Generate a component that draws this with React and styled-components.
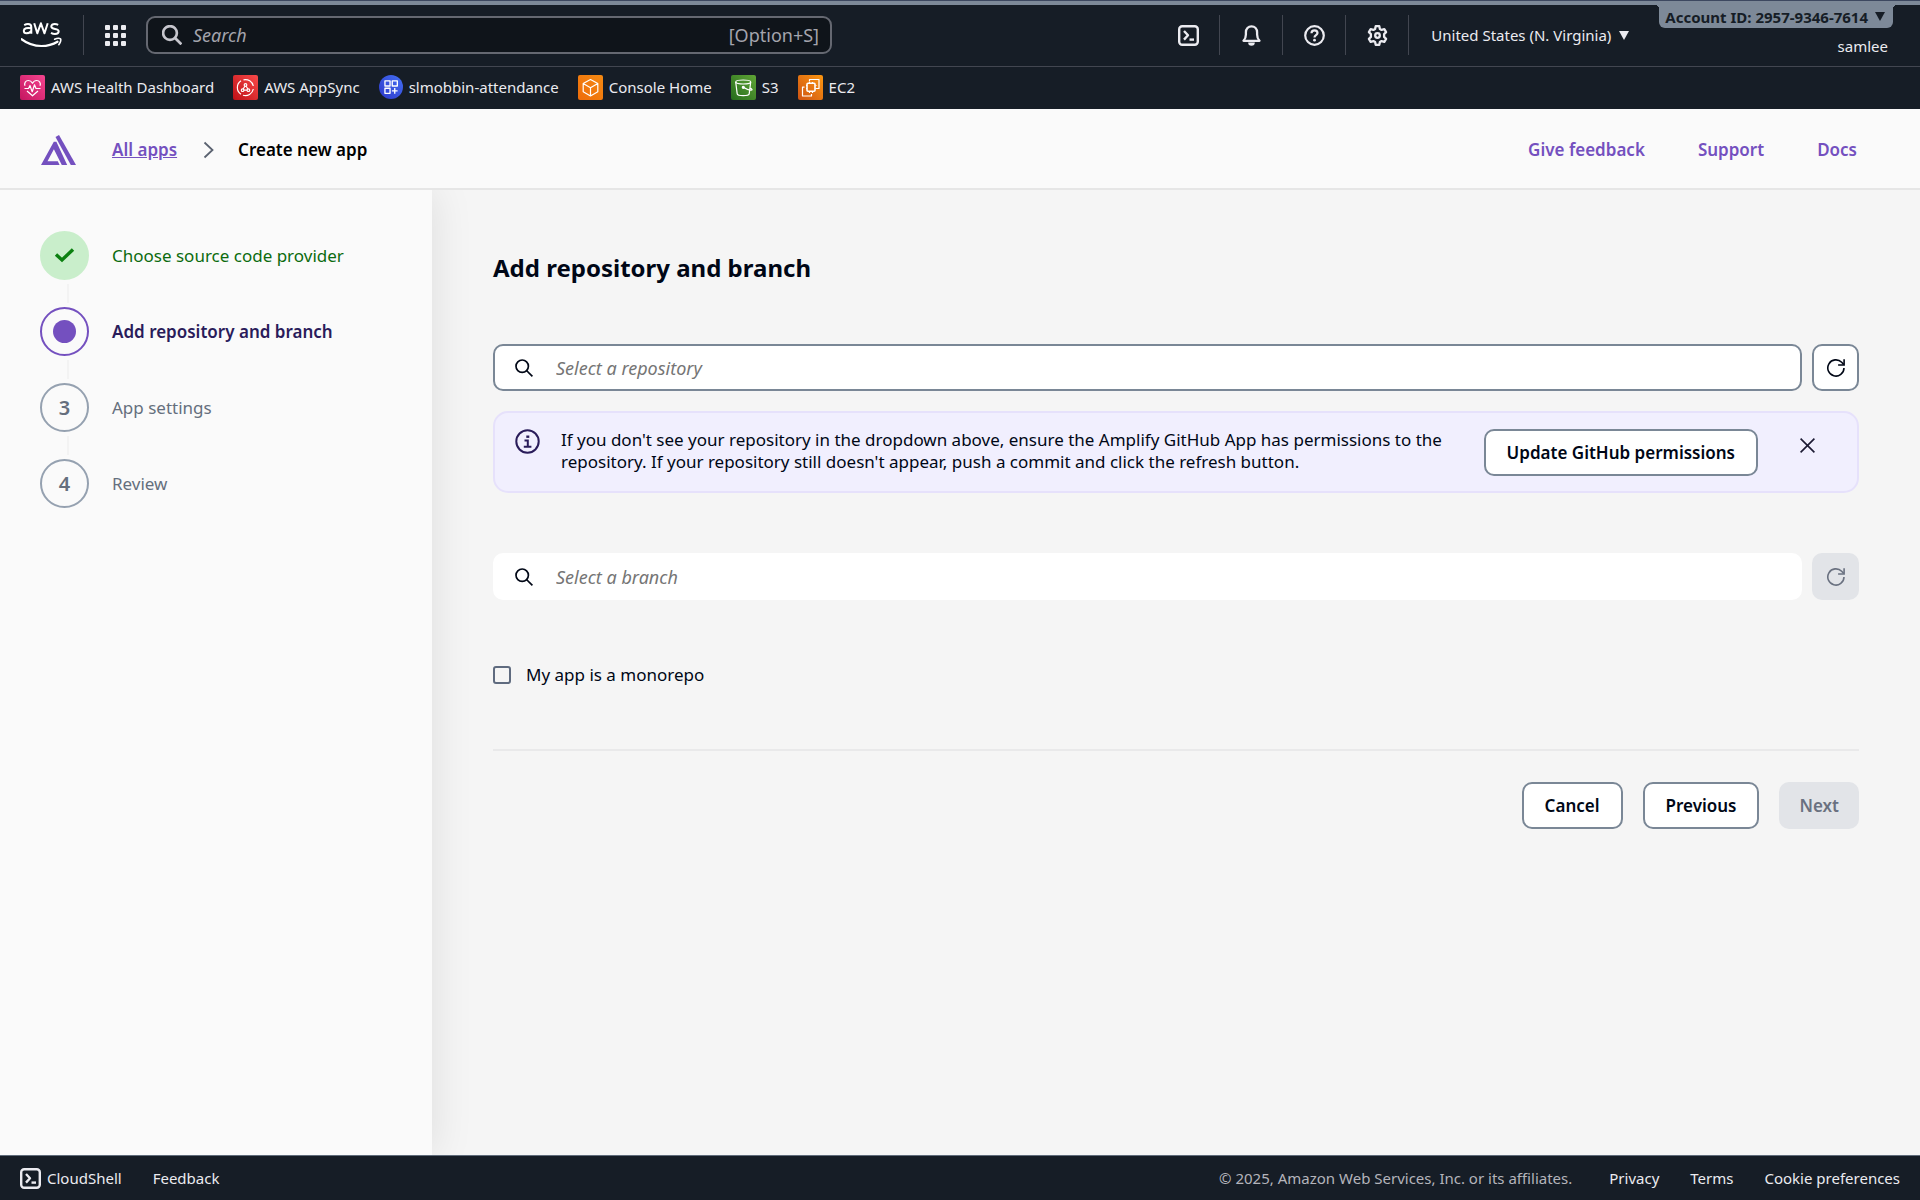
import React from "react";
import styled, { createGlobalStyle, css } from "styled-components";

const GlobalStyle = createGlobalStyle`
  *, *::before, *::after { box-sizing: border-box; }
  body {
    margin: 0;
    font-family: "Noto Sans", "Open Sans", sans-serif;
    font-size: 17px;
    color: #000716;
    background: #f5f5f5;
  }
  button, input { font: inherit; color: inherit; }
  a { color: inherit; text-decoration: none; }
  svg { display: block; flex: none; }
`;

const Page = styled.div`
  min-height: 100vh;
  display: flex;
  flex-direction: column;
`;

const AccentStrip = styled.div`
  height: 5px;
  background: #7d8998;
  border-top: 1px solid #3d4860;
`;

/* ---------- Console header ---------- */

const TopBar = styled.header`
  display: flex;
  height: 62px;
  background: #161d26;
  border-bottom: 1px solid #424650;
  color: #ebebf0;
`;

const TopGroup = styled.div`
  display: flex;
  align-items: center;
  padding-bottom: 1px;
`;

const Divider = styled.span`
  width: 1px;
  height: 40px;
  background: #424650;
`;

const IconButton = styled.button`
  display: flex;
  align-items: center;
  justify-content: center;
  width: 62px;
  height: 40px;
  padding: 0;
  border: 0;
  background: none;
  color: #ebebf0;
`;

const LogoLink = styled.a`
  display: flex;
  padding: 0 21px;
`;

const GlobalSearch = styled.label`
  display: flex;
  align-items: center;
  flex: 0 1 686px;
  height: 38px;
  padding: 0 11px 0 14px;
  border: 2px solid #656871;
  border-radius: 9px;
  background: #0f141a;
  color: #c6c6cd;
  font-size: 18px;
`;

const GlobalSearchInput = styled.input`
  flex: 1;
  min-width: 0;
  padding: 0 11px;
  border: 0;
  outline: 0;
  background: none;
  &::placeholder { color: #a4a4ad; font-style: italic; opacity: 1; }
`;

const Shortcut = styled.span`
  color: #a4a4ad;
`;

const SearchGroup = styled(TopGroup)`
  flex: 1;
  min-width: 0;
`;

const RegionButton = styled.button`
  display: flex;
  align-items: center;
  gap: 8px;
  height: 40px;
  margin: 0;
  padding: 0 8px 0 22px;
  border: 0;
  background: none;
  color: #ebebf0;
  font-size: 15px;
  white-space: nowrap;
`;

const Account = styled.div`
  display: flex;
  flex-direction: column;
  align-items: flex-end;
  gap: 7px;
  padding: 0 27px 0 22px;
`;

const AccountTab = styled.button`
  position: relative;
  display: flex;
  align-items: center;
  gap: 7px;
  height: 23px;
  padding: 0 8px 0 6px;
  border: 0;
  border-radius: 0 0 6px 6px;
  background: #7d8998;
  color: #161d26;
  font-size: 15px;
  font-weight: 700;
  white-space: nowrap;
  &::before, &::after {
    content: "";
    position: absolute;
    top: 0;
    width: 4px;
    height: 4px;
  }
  &::before { right: 100%; background: radial-gradient(circle at 0 100%, transparent 4px, #7d8998 4px); }
  &::after { left: 100%; background: radial-gradient(circle at 100% 100%, transparent 4px, #7d8998 4px); }
`;

const UserName = styled.span`
  padding-right: 5px;
  font-size: 15px;
  line-height: 22px;
`;

const Favorites = styled.nav`
  display: flex;
  align-items: center;
  gap: 19px;
  height: 42px;
  padding: 0 20px 2px;
  background: #161d26;
  color: #ebebf0;
  font-size: 15px;
`;

const Favorite = styled.a`
  display: flex;
  align-items: center;
  gap: 6px;
  white-space: nowrap;
`;

/* ---------- Amplify header ---------- */

const AppHeader = styled.header`
  display: flex;
  align-items: center;
  justify-content: space-between;
  height: 81px;
  padding: 2px 63px 0 41px;
  border-bottom: 2px solid #e6e6e6;
  background: #fafafa;
  font-weight: 600;
`;

const Crumbs = styled.nav`
  display: flex;
  align-items: center;
`;

const AllApps = styled.a`
  margin: 0 26px 0 36px;
  color: #7450bf;
  text-decoration: underline;
`;

const CurrentCrumb = styled.span`
  margin-left: 24px;
  color: #000;
`;

const HeaderLinks = styled.nav`
  display: flex;
  gap: 53px;
  color: #7450bf;
`;

/* ---------- Wizard ---------- */

const Body = styled.div`
  flex: 1;
  display: flex;
`;

const Sidebar = styled.aside`
  flex: none;
  width: 432px;
  padding: 41px 40px;
  background: #fafafa;
  box-shadow: 0 0 40px rgba(0, 0, 0, 0.1);
  clip-path: inset(0 -40px 0 0);
`;

const Steps = styled.ol`
  display: flex;
  flex-direction: column;
  margin: 0;
  padding: 0;
  list-style: none;
`;

const stepLook = {
  done: css`color: #0b6b0e; --ring: #c9eecb; --fill: #c9eecb;`,
  active: css`color: #2a1c5a; font-weight: 600; --ring: #7450bf; --fill: transparent;`,
  todo: css`color: #656f7d; --ring: #95a1b0; --fill: transparent;`,
};

const Step = styled.li`
  display: flex;
  align-items: center;
  gap: 23px;
  ${(p) => stepLook[p.$state]}
`;

const StepMark = styled.span`
  display: flex;
  align-items: center;
  justify-content: center;
  width: 49px;
  height: 49px;
  border: 2px solid var(--ring);
  border-radius: 50%;
  background: var(--fill);
  font-size: 20px;
  font-weight: 600;
`;

const ActiveDot = styled.span`
  width: 23px;
  height: 23px;
  border-radius: 50%;
  background: #7450bf;
`;

const Connector = styled.li`
  width: 2px;
  height: 19px;
  margin: 4px 0 4px 27px;
  background: #f3f3f3;
`;

const Main = styled.main`
  flex: 1;
  min-width: 0;
  display: flex;
  flex-direction: column;
  padding: 60px 61px;
`;

const Title = styled.h1`
  margin: 0 0 58px;
  font-size: 24px;
  line-height: 36px;
  font-weight: 700;
`;

const FieldRow = styled.div`
  display: flex;
  gap: 10px;
`;

const Field = styled.label`
  flex: 1;
  display: flex;
  align-items: center;
  gap: 23px;
  height: 47px;
  padding: 0 20px;
  border: 2px solid ${(p) => (p.$plain ? "#fff" : "#7a8796")};
  border-radius: 10px;
  background: #fff;
  color: #000716;
  font-size: 18px;
`;

const FieldInput = styled.input`
  flex: 1;
  min-width: 0;
  padding: 0;
  border: 0;
  outline: 0;
  background: none;
  &::placeholder { color: #757575; font-style: italic; opacity: 1; }
`;

const Button = styled.button`
  display: flex;
  align-items: center;
  justify-content: center;
  flex: none;
  min-width: 47px;
  height: 47px;
  padding: 0 ${(p) => (p.$square ? 0 : 21)}px;
  border: 2px solid #7a8796;
  border-radius: 10px;
  background: #fff;
  color: #000716;
  font-weight: 600;
  white-space: nowrap;
  &:disabled {
    padding: 0 ${(p) => (p.$square ? 0 : 20)}px;
    border: 0;
    background: #e2e4e8;
    color: #6a7180;
  }
`;

const Notice = styled.section`
  display: flex;
  align-items: flex-start;
  margin: 20px 0 60px;
  padding: 16px 38px 15px 20px;
  border: 2px solid #e6e1fb;
  border-radius: 15px;
  background: #f1effe;
`;

const NoticeText = styled.p`
  flex: 1;
  margin: 0 34px 0 21px;
  line-height: 22px;
`;

const CloseButton = styled.button`
  display: flex;
  align-items: center;
  justify-content: center;
  width: 24px;
  height: 32px;
  margin-left: 37px;
  padding: 0;
  border: 0;
  background: none;
  color: #1c1a33;
`;

const CheckRow = styled.label`
  display: flex;
  align-items: center;
  align-self: flex-start;
  gap: 15px;
  margin: 63px 0 62px;
  line-height: 24px;
`;

const Checkbox = styled.input`
  appearance: none;
  width: 18px;
  height: 18px;
  margin: 0;
  border: 2px solid #5f6b7f;
  border-radius: 3px;
`;

const Actions = styled.div`
  display: flex;
  justify-content: flex-end;
  gap: 20px;
  padding-top: 31px;
  border-top: 2px solid #e9e9ea;
`;

/* ---------- Footer ---------- */

const Footer = styled.footer`
  display: flex;
  align-items: center;
  gap: 31px;
  height: 45px;
  padding: 0 20px;
  border-top: 1px solid #5f6b7a;
  background: #161d26;
  color: #ebebf0;
  font-size: 15px;
`;

const ShellLink = styled.button`
  display: flex;
  align-items: center;
  gap: 6px;
  padding: 0;
  border: 0;
  background: none;
`;

const Copyright = styled.span`
  margin-left: auto;
  padding-right: 6px;
  color: #b4b4bb;
`;

/* ---------- Drawings ---------- */

const AwsLogo = () => (
  <svg width="41" height="26" viewBox="0 0 41 26" fill="none" stroke="#fff" strokeLinejoin="round">
    <path d="M3.2 3.1C4.400 2.400 5.600 2 7 2c2.300 0 3.300 1 3.300 3.100v6.600M10.300 6.200C6 5.400 2.800 6.200 2.800 8.800c0 1.600 1 2.500 2.700 2.500 2 0 3.700-1 4.800-2.500" strokeWidth="2" />
    <path d="M13.200 1.300 16.300 11.300 19.900 1.300 23.500 11.300 26.700 1.300" strokeWidth="2" />
    <path d="M37.200 2.800C36 2.200 34.900 2 33.700 2c-2 0-3.400.8-3.400 2.500 0 3.600 7.400 1.300 7.400 4.800 0 1.600-1.300 2.600-3.700 2.600-1.500 0-2.800-.4-4-1.100" strokeWidth="2" />
    <path d="M.5 17.200C6 21.400 13 24 20.400 24c5.500 0 11.200-1.300 16.100-4.300" strokeWidth="2.200" strokeLinecap="round" />
    <path d="M33.600 17.200c2-.9 5-1.100 6-.3.700 1-.3 4-1.800 5.800" strokeWidth="1.600" strokeLinecap="round" />
  </svg>
);

const GridIcon = () => (
  <svg width="21" height="21" viewBox="0 0 21 21" fill="currentColor">
    {[0, 8, 16].map((y) => [0, 8, 16].map((x) => <rect key={`${x}-${y}`} x={x} y={y} width="5" height="5" rx="1" />))}
  </svg>
);

const SearchIcon = ({ size = 18, weight = 1.7 }) => (
  <svg width={size} height={size} viewBox="0 0 18 18" fill="none" stroke="currentColor" strokeWidth={weight}>
    <circle cx="7.200" cy="7.200" r="6.200" />
    <path d="M11.500 11.500 17.400 17.400" />
  </svg>
);

const TerminalIcon = () => (
  <svg width="21" height="21" viewBox="0 0 21 21" fill="none" stroke="currentColor" strokeWidth="2.400" strokeLinejoin="round">
    <rect x="1.200" y="1.200" width="18.600" height="18.600" rx="3" />
    <path d="M6 6 10 10.300 6 14.600" />
    <path d="M11.500 14.600H16" />
  </svg>
);

const BellIcon = () => (
  <svg width="21" height="21" viewBox="0 0 21 21" fill="none" stroke="currentColor" strokeWidth="2.300" strokeLinejoin="round">
    <path d="M2.500 15.800C4.300 14 4.900 12.500 4.900 9.500V7.300C4.900 4 7.200 1.300 10.500 1.300S16.100 4 16.100 7.300v2.200c0 3 .6 4.500 2.400 6.300Z" />
    <path d="M7.200 17.500a3.300 3.300 0 0 0 6.600 0Z" fill="currentColor" stroke="none" />
  </svg>
);

const HelpIcon = () => (
  <svg width="21" height="21" viewBox="0 0 21 21" fill="none" stroke="currentColor" strokeWidth="2.200">
    <circle cx="10.500" cy="10.500" r="9.300" />
    <path d="M7.500 8.200c0-1.800 1.300-2.900 3-2.900s3 1.100 3 2.700c0 2.200-3 2.200-3 4.600" />
    <circle cx="10.500" cy="15.200" r="1.400" fill="currentColor" stroke="none" />
  </svg>
);

const GearIcon = () => (
  <svg width="21" height="21" viewBox="0 0 21 21" fill="none" stroke="currentColor" strokeWidth="2.300" strokeLinejoin="round">
    <path d="M8.700 1.200h3.600l.6 2.700 1.700 1 2.700-.8 1.800 3.100-2 1.900v2.800l2 1.900-1.800 3.100-2.700-.8-1.700 1-.6 2.700H8.700l-.6-2.700-1.700-1-2.700.8-1.800-3.100 2-1.900V9.100l-2-1.900 1.800-3.100 2.700.8 1.700-1Z" />
    <circle cx="10.500" cy="10.500" r="2.300" />
  </svg>
);

const Caret = () => (
  <svg width="10" height="9" viewBox="0 0 10 9" fill="currentColor">
    <path d="M0 0h10L5 9Z" />
  </svg>
);

const Tile = ({ from, to, round, children }) => {
  const id = `tile-${from.slice(1)}`;
  return (
    <svg width={round ? 24 : 25} height={round ? 24 : 25} viewBox="0 0 25 25" fill="none" stroke="#fff" strokeWidth="1.200" strokeLinejoin="round">
      <linearGradient id={id} x1="0" y1="1" x2="1" y2="0">
        <stop offset="0" stopColor={from} />
        <stop offset="1" stopColor={to} />
      </linearGradient>
      <rect width="25" height="25" rx={round ? 12.5 : 2} fill={`url(#${id})`} stroke="none" />
      {children}
    </svg>
  );
};

const HealthIcon = () => (
  <Tile from="#c41560" to="#f5458f">
    <path d="M5 10.800C3.900 8 5.700 5.500 8.300 5.500c1.800 0 3.200 1 4.200 2.800 1-1.800 2.400-2.800 4.200-2.800 2.600 0 4.400 2.500 3.300 5.300M7 16l5.500 4.800L18 16" />
    <path d="M4.500 13.500h4l1.500-3 2.200 6.200 2.300-7 1.500 3.800h4.500" />
  </Tile>
);

const AppSyncIcon = () => (
  <Tile from="#bd1016" to="#f94a4a">
    <path d="M8 5.800A8 8 0 0 0 8 19.200M10 20.200A8 8 0 0 0 20.300 14M20.300 11A8 8 0 0 0 10.500 4.800" />
    <circle cx="12.500" cy="10" r="1.300" />
    <circle cx="9.600" cy="15.200" r="1.300" />
    <circle cx="15.400" cy="15.200" r="1.300" />
    <path d="M11.800 11.200 10.200 14M13.200 11.200 14.800 14M11 15.200h3" />
  </Tile>
);

const AttendanceIcon = () => (
  <Tile from="#2c37c9" to="#4470f4" round>
    <path d="M6.200 6.200h5.300v5.300H6.200ZM13.800 6.200h5.300v5.300h-5.300ZM6.200 13.800h5.300v5.300H6.200ZM16.400 13.500v6M13.400 16.500h6" strokeWidth="1.400" />
  </Tile>
);

const ConsoleIcon = () => (
  <Tile from="#ee6c0a" to="#f58a12">
    <path d="M12.500 4.500 19.800 8.500v8.300l-7.300 4.200-7.300-4.200V8.500ZM5.200 8.500l7.300 4.200 7.300-4.200M12.500 12.700V21" />
  </Tile>
);

const S3Icon = () => (
  <Tile from="#256c1c" to="#60a536">
    <ellipse cx="12.200" cy="7" rx="7.500" ry="2" />
    <path d="M4.700 7 6.200 18.800c.4 2.300 11.600 2.300 12 0L19.700 7M12.300 12.300c3 1.800 6.500 3.200 8.500 2.600.8-.6-.8-1.500-2-2" />
    <circle cx="12.300" cy="12.300" r="1" fill="#fff" />
  </Tile>
);

const Ec2Icon = () => (
  <Tile from="#ce5313" to="#fb9610">
    <rect x="9" y="8.200" width="8" height="8" rx="1" strokeWidth="1.600" />
    <path d="M11.500 6.500V4.500h9.500v9h-2.500M6.500 12.200H4.500v8.800h9v-2M11.500 7v1M14.500 7v1M17.500 10.500h1M17.500 13.500h1M8 10.500h1M8 13.500h1M11.500 16.500v1.500M14.500 16.500v1.500" />
  </Tile>
);

const AmplifyLogo = () => (
  <svg width="35" height="30" viewBox="0 0 35 30" fill="#7450bf">
    <path d="M14.500 2 18 0 35 30H29.800Z" />
    <path d="M12.800 6.800h2.600L26.200 30h-5.400L12.900 14.200 6.500 26.200h10.300L18.600 30H0Z" />
  </svg>
);

const ChevronIcon = () => (
  <svg width="11" height="18" viewBox="0 0 11 18" fill="none" stroke="#5a6270" strokeWidth="1.800">
    <path d="M1.500 1.500 9.500 9l-8 7.500" />
  </svg>
);

const CheckIcon = () => (
  <svg width="21" height="15" viewBox="0 0 21 15" fill="none" stroke="#0b8010" strokeWidth="3.400">
    <path d="M2 6.500 8 12 19 1.500" />
  </svg>
);

const RefreshIcon = () => (
  <svg width="18" height="18" viewBox="0 0 18 18" fill="none" stroke="currentColor" strokeWidth="1.600">
    <path d="M17 9a8.100 8.100 0 1 1-2.300-5.700L16.700 5.500" />
    <path d="M17.100.2V6h-6" />
  </svg>
);

const InfoIcon = () => (
  <svg width="25" height="25" viewBox="0 0 25 25" fill="none" stroke="#2a1c5a" strokeWidth="2">
    <circle cx="12.500" cy="12.500" r="11.200" />
    <path d="M9.500 11.500h3.300v6M8.800 17.700h7.600" />
    <path d="M11.300 7.700h3" strokeWidth="2.400" />
  </svg>
);

const CloseIcon = () => (
  <svg width="15" height="15" viewBox="0 0 15 15" fill="none" stroke="currentColor" strokeWidth="1.600">
    <path d="M.6.6 14.400 14.400M14.400.6.6 14.400" />
  </svg>
);

/* ---------- Page ---------- */

const favorites = [
  ["AWS Health Dashboard", HealthIcon],
  ["AWS AppSync", AppSyncIcon],
  ["slmobbin-attendance", AttendanceIcon],
  ["Console Home", ConsoleIcon],
  ["S3", S3Icon],
  ["EC2", Ec2Icon],
];

const steps = [
  { label: "Choose source code provider", state: "done", mark: <CheckIcon /> },
  { label: "Add repository and branch", state: "active", mark: <ActiveDot /> },
  { label: "App settings", state: "todo", mark: "3" },
  { label: "Review", state: "todo", mark: "4" },
];

const tools = [
  ["CloudShell", TerminalIcon],
  ["Notifications", BellIcon],
  ["Help", HelpIcon],
  ["Settings", GearIcon],
];

export default function App() {
  return (
    <Page>
      <GlobalStyle />
      <AccentStrip />
      <TopBar>
        <SearchGroup>
          <LogoLink href="#" aria-label="AWS home"><AwsLogo /></LogoLink>
          <Divider />
          <IconButton aria-label="Services"><GridIcon /></IconButton>
          <GlobalSearch>
            <SearchIcon size={20} weight={2.4} />
            <GlobalSearchInput type="text" placeholder="Search" aria-label="Search" />
            <Shortcut>[Option+S]</Shortcut>
          </GlobalSearch>
        </SearchGroup>
        <TopGroup>
          {tools.map(([name, Icon]) => (
            <React.Fragment key={name}>
              <IconButton aria-label={name}><Icon /></IconButton>
              <Divider />
            </React.Fragment>
          ))}
          <RegionButton>United States (N. Virginia) <Caret /></RegionButton>
        </TopGroup>
        <Account>
          <AccountTab>Account ID: 2957-9346-7614 <Caret /></AccountTab>
          <UserName>samlee</UserName>
        </Account>
      </TopBar>
      <Favorites aria-label="Favorites">
        {favorites.map(([name, Icon]) => (
          <Favorite href="#" key={name}><Icon />{name}</Favorite>
        ))}
      </Favorites>

      <AppHeader>
        <Crumbs aria-label="Breadcrumb">
          <AmplifyLogo />
          <AllApps href="#">All apps</AllApps>
          <ChevronIcon />
          <CurrentCrumb>Create new app</CurrentCrumb>
        </Crumbs>
        <HeaderLinks>
          <a href="#">Give feedback</a>
          <a href="#">Support</a>
          <a href="#">Docs</a>
        </HeaderLinks>
      </AppHeader>

      <Body>
        <Sidebar>
          <Steps>
            {steps.map(({ label, state, mark }, i) => (
              <React.Fragment key={label}>
                {i > 0 && <Connector role="presentation" />}
                <Step $state={state} aria-current={state === "active" ? "step" : undefined}>
                  <StepMark>{mark}</StepMark>
                  {label}
                </Step>
              </React.Fragment>
            ))}
          </Steps>
        </Sidebar>
        <Main>
          <Title>Add repository and branch</Title>
          <FieldRow>
            <Field>
              <SearchIcon />
              <FieldInput type="text" placeholder="Select a repository" aria-label="Repository" />
            </Field>
            <Button $square aria-label="Refresh repositories"><RefreshIcon /></Button>
          </FieldRow>
          <Notice>
            <InfoIcon />
            <NoticeText>
              If you don't see your repository in the dropdown above, ensure the Amplify GitHub App has permissions to the repository. If your repository still doesn't appear, push a commit and click the refresh button.
            </NoticeText>
            <Button>Update GitHub permissions</Button>
            <CloseButton aria-label="Dismiss"><CloseIcon /></CloseButton>
          </Notice>
          <FieldRow>
            <Field $plain>
              <SearchIcon />
              <FieldInput type="text" placeholder="Select a branch" aria-label="Branch" />
            </Field>
            <Button $square disabled aria-label="Refresh branches"><RefreshIcon /></Button>
          </FieldRow>
          <CheckRow>
            <Checkbox type="checkbox" />
            My app is a monorepo
          </CheckRow>
          <Actions>
            <Button>Cancel</Button>
            <Button>Previous</Button>
            <Button disabled>Next</Button>
          </Actions>
        </Main>
      </Body>

      <Footer>
        <ShellLink><TerminalIcon />CloudShell</ShellLink>
        <a href="#">Feedback</a>
        <Copyright>© 2025, Amazon Web Services, Inc. or its affiliates.</Copyright>
        <a href="#">Privacy</a>
        <a href="#">Terms</a>
        <a href="#">Cookie preferences</a>
      </Footer>
    </Page>
  );
}
